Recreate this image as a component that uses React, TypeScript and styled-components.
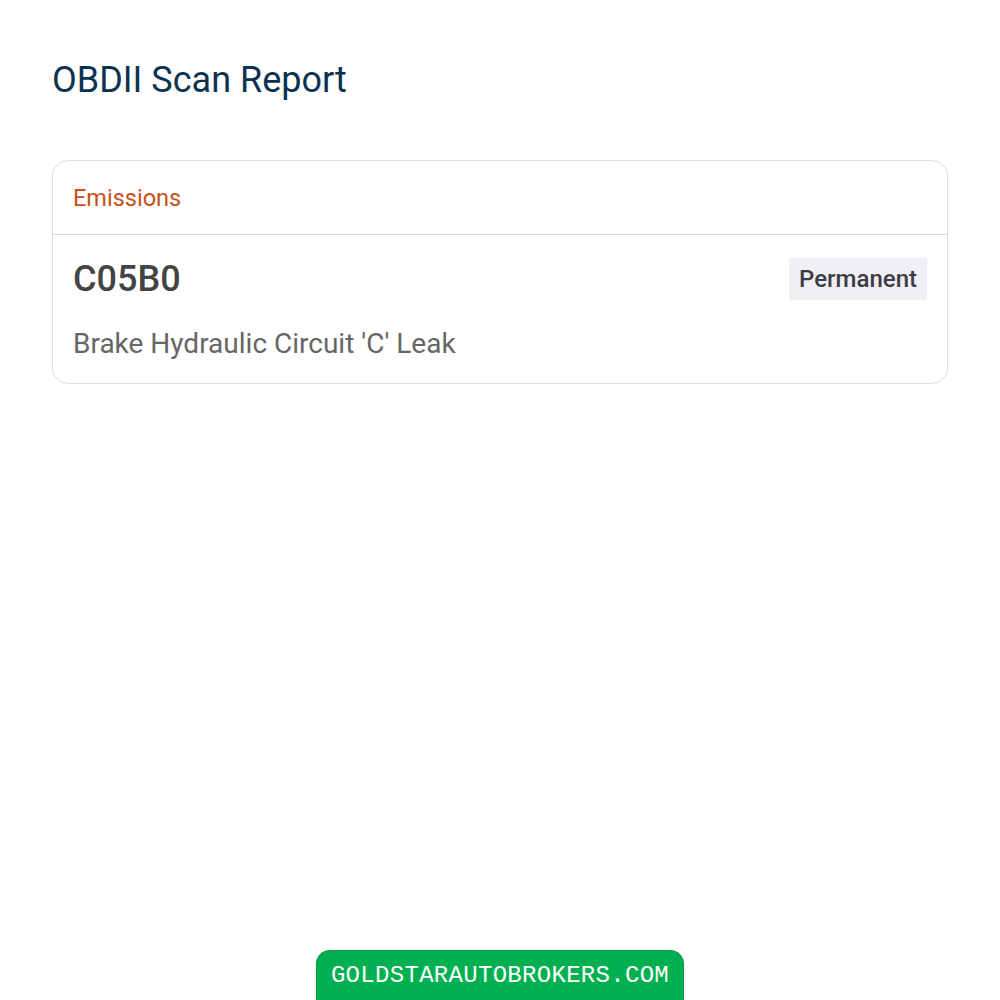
import React from "react";
import styled, { createGlobalStyle } from "styled-components";

const Global = createGlobalStyle`
  html, body { margin: 0; padding: 0; background: #ffffff; }
  body { font-family: Roboto, "Noto Sans", sans-serif; }
`;

const Page = styled.div`
  min-height: 1000px;
  display: flex;
  flex-direction: column;
  padding: 0 52px;
  box-sizing: border-box;
`;

const Title = styled.h1`
  margin: 58px 0 0 0;
  font-size: 36px;
  font-weight: 400;
  line-height: 44px;
  color: #0b3350;
`;

const Card = styled.section`
  margin-top: 58px;
  border: 1px solid #dcdcdc;
  border-radius: 16px;
  overflow: hidden;
`;

const CardHeader = styled.div`
  height: 73px;
  display: flex;
  align-items: center;
  padding: 0 20px;
  border-bottom: 1px solid #d6d6d6;
  color: #c8501a;
  font-size: 23.5px;
  font-weight: 400;
`;

const CardBody = styled.div`
  padding: 23px 20px 23px;
  display: flex;
  flex-direction: column;
  gap: 28px;
`;

const CodeRow = styled.div`
  display: flex;
  align-items: center;
  justify-content: space-between;
`;

const Code = styled.div`
  font-size: 36px;
  font-weight: 500;
  color: #444444;
  line-height: 42px;
`;

const Badge = styled.span`
  background: #f0f0f4;
  color: #3c3c44;
  font-size: 24px;
  font-weight: 500;
  padding: 8px 10px;
  line-height: 26px;
`;

const Description = styled.p`
  margin: 0;
  font-size: 28px;
  color: #666666;
  line-height: 32px;
`;

const Footer = styled.footer`
  margin-top: auto;
  align-self: center;
  width: 368px;
  height: 50px;
  box-sizing: border-box;
  background: #00b050;
  border: 1px solid #0a9a46;
  border-bottom: none;
  border-radius: 14px 14px 0 0;
  display: flex;
  align-items: center;
  justify-content: center;
  color: #ffffff;
  font-family: "Liberation Mono", "Courier New", monospace;
  font-size: 24px;
  letter-spacing: 0.3px;
`;

export default function App() {
  return (
    <>
      <Global />
      <Page>
        <Title>OBDII Scan Report</Title>
        <Card>
          <CardHeader>Emissions</CardHeader>
          <CardBody>
            <CodeRow>
              <Code>C05B0</Code>
              <Badge>Permanent</Badge>
            </CodeRow>
            <Description>Brake Hydraulic Circuit 'C' Leak</Description>
          </CardBody>
        </Card>
        <Footer>GOLDSTARAUTOBROKERS.COM</Footer>
      </Page>
    </>
  );
}
